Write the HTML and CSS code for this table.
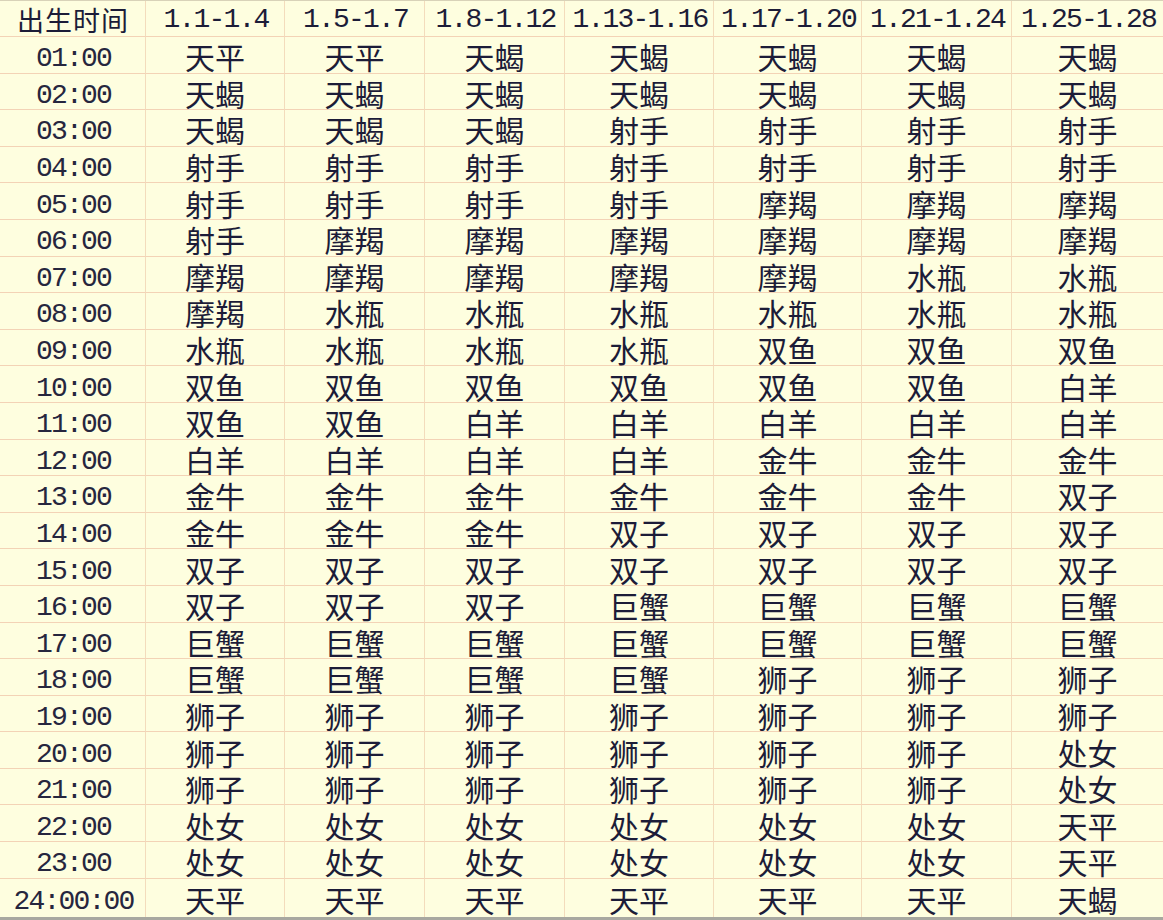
FILE: index.html
```html
<!DOCTYPE html>
<html lang="zh-CN">
<head>
<meta charset="utf-8">
<title>出生时间 星座表</title>
<link rel="stylesheet" href="styles.css">
</head>
<body>
<div class="sheet">
<div class="cell head label">出生时间</div><div class="cell head">1.1-1.4</div><div class="cell head">1.5-1.7</div><div class="cell head">1.8-1.12</div><div class="cell head">1.13-1.16</div><div class="cell head">1.17-1.20</div><div class="cell head">1.21-1.24</div><div class="cell head">1.25-1.28</div>
<div class="cell time">01:00</div><div class="cell">天平</div><div class="cell">天平</div><div class="cell">天蝎</div><div class="cell">天蝎</div><div class="cell">天蝎</div><div class="cell">天蝎</div><div class="cell">天蝎</div>
<div class="cell time">02:00</div><div class="cell">天蝎</div><div class="cell">天蝎</div><div class="cell">天蝎</div><div class="cell">天蝎</div><div class="cell">天蝎</div><div class="cell">天蝎</div><div class="cell">天蝎</div>
<div class="cell time">03:00</div><div class="cell">天蝎</div><div class="cell">天蝎</div><div class="cell">天蝎</div><div class="cell">射手</div><div class="cell">射手</div><div class="cell">射手</div><div class="cell">射手</div>
<div class="cell time">04:00</div><div class="cell">射手</div><div class="cell">射手</div><div class="cell">射手</div><div class="cell">射手</div><div class="cell">射手</div><div class="cell">射手</div><div class="cell">射手</div>
<div class="cell time">05:00</div><div class="cell">射手</div><div class="cell">射手</div><div class="cell">射手</div><div class="cell">射手</div><div class="cell">摩羯</div><div class="cell">摩羯</div><div class="cell">摩羯</div>
<div class="cell time">06:00</div><div class="cell">射手</div><div class="cell">摩羯</div><div class="cell">摩羯</div><div class="cell">摩羯</div><div class="cell">摩羯</div><div class="cell">摩羯</div><div class="cell">摩羯</div>
<div class="cell time">07:00</div><div class="cell">摩羯</div><div class="cell">摩羯</div><div class="cell">摩羯</div><div class="cell">摩羯</div><div class="cell">摩羯</div><div class="cell">水瓶</div><div class="cell">水瓶</div>
<div class="cell time">08:00</div><div class="cell">摩羯</div><div class="cell">水瓶</div><div class="cell">水瓶</div><div class="cell">水瓶</div><div class="cell">水瓶</div><div class="cell">水瓶</div><div class="cell">水瓶</div>
<div class="cell time">09:00</div><div class="cell">水瓶</div><div class="cell">水瓶</div><div class="cell">水瓶</div><div class="cell">水瓶</div><div class="cell">双鱼</div><div class="cell">双鱼</div><div class="cell">双鱼</div>
<div class="cell time">10:00</div><div class="cell">双鱼</div><div class="cell">双鱼</div><div class="cell">双鱼</div><div class="cell">双鱼</div><div class="cell">双鱼</div><div class="cell">双鱼</div><div class="cell">白羊</div>
<div class="cell time">11:00</div><div class="cell">双鱼</div><div class="cell">双鱼</div><div class="cell">白羊</div><div class="cell">白羊</div><div class="cell">白羊</div><div class="cell">白羊</div><div class="cell">白羊</div>
<div class="cell time">12:00</div><div class="cell">白羊</div><div class="cell">白羊</div><div class="cell">白羊</div><div class="cell">白羊</div><div class="cell">金牛</div><div class="cell">金牛</div><div class="cell">金牛</div>
<div class="cell time">13:00</div><div class="cell">金牛</div><div class="cell">金牛</div><div class="cell">金牛</div><div class="cell">金牛</div><div class="cell">金牛</div><div class="cell">金牛</div><div class="cell">双子</div>
<div class="cell time">14:00</div><div class="cell">金牛</div><div class="cell">金牛</div><div class="cell">金牛</div><div class="cell">双子</div><div class="cell">双子</div><div class="cell">双子</div><div class="cell">双子</div>
<div class="cell time">15:00</div><div class="cell">双子</div><div class="cell">双子</div><div class="cell">双子</div><div class="cell">双子</div><div class="cell">双子</div><div class="cell">双子</div><div class="cell">双子</div>
<div class="cell time">16:00</div><div class="cell">双子</div><div class="cell">双子</div><div class="cell">双子</div><div class="cell">巨蟹</div><div class="cell">巨蟹</div><div class="cell">巨蟹</div><div class="cell">巨蟹</div>
<div class="cell time">17:00</div><div class="cell">巨蟹</div><div class="cell">巨蟹</div><div class="cell">巨蟹</div><div class="cell">巨蟹</div><div class="cell">巨蟹</div><div class="cell">巨蟹</div><div class="cell">巨蟹</div>
<div class="cell time">18:00</div><div class="cell">巨蟹</div><div class="cell">巨蟹</div><div class="cell">巨蟹</div><div class="cell">巨蟹</div><div class="cell">狮子</div><div class="cell">狮子</div><div class="cell">狮子</div>
<div class="cell time">19:00</div><div class="cell">狮子</div><div class="cell">狮子</div><div class="cell">狮子</div><div class="cell">狮子</div><div class="cell">狮子</div><div class="cell">狮子</div><div class="cell">狮子</div>
<div class="cell time">20:00</div><div class="cell">狮子</div><div class="cell">狮子</div><div class="cell">狮子</div><div class="cell">狮子</div><div class="cell">狮子</div><div class="cell">狮子</div><div class="cell">处女</div>
<div class="cell time">21:00</div><div class="cell">狮子</div><div class="cell">狮子</div><div class="cell">狮子</div><div class="cell">狮子</div><div class="cell">狮子</div><div class="cell">狮子</div><div class="cell">处女</div>
<div class="cell time">22:00</div><div class="cell">处女</div><div class="cell">处女</div><div class="cell">处女</div><div class="cell">处女</div><div class="cell">处女</div><div class="cell">处女</div><div class="cell">天平</div>
<div class="cell time">23:00</div><div class="cell">处女</div><div class="cell">处女</div><div class="cell">处女</div><div class="cell">处女</div><div class="cell">处女</div><div class="cell">处女</div><div class="cell">天平</div>
<div class="cell time last">24:00:00</div><div class="cell last">天平</div><div class="cell last">天平</div><div class="cell last">天平</div><div class="cell last">天平</div><div class="cell last">天平</div><div class="cell last">天平</div><div class="cell last">天蝎</div>
</div>
</body>
</html>
```
FILE: styles.css
```css
html, body {
  margin: 0;
  padding: 0;
  background: #fefedf;
}

.sheet {
  display: grid;
  grid-template-columns: 146px 139px 140px 140px 149px 148px 150px 151px;
  grid-template-rows: 36px repeat(23, 36.6px) 38px;
  width: 1163px;
  background: #fefedf;
  color: #1c1c38;
  border-top: 1px solid #d8d2b8;
  border-bottom: 3px solid #a8a8a0;
}

.cell {
  box-sizing: border-box;
  display: flex;
  align-items: center;
  justify-content: center;
  white-space: nowrap;
  border-right: 1px solid #f3dcbc;
  border-bottom: 1px solid #f3d3b6;
  padding-top: 3px;
  font-family: "Noto Sans CJK SC", sans-serif;
  font-size: 30px;
  line-height: 30px;
}

.cell:nth-child(8n) {
  border-right: none;
}

.cell.last {
  border-bottom: none;
}

.cell.head {
  padding-top: 2px;
  font-family: "Liberation Mono", "DejaVu Sans Mono", monospace;
  font-size: 28px;
  line-height: 28px;
  letter-spacing: -1.8px;
  padding-left: 1.8px;
}

.cell.head.label {
  font-family: "Noto Sans CJK SC", sans-serif;
  font-size: 27px;
  line-height: 28px;
  letter-spacing: 1px;
  padding-left: 1px;
}

.cell.time {
  padding-top: 9px;
  font-family: "Liberation Mono", "DejaVu Sans Mono", monospace;
  font-size: 28px;
  line-height: 26px;
  letter-spacing: -1.8px;
  padding-left: 1.8px;
  color: #26263e;
}
```
